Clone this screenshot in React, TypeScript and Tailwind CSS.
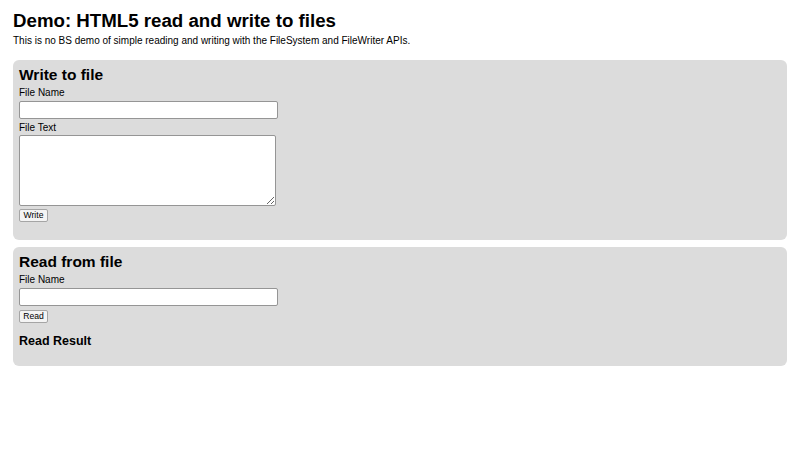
export default function App() {
  return (
    <div className="min-h-[450px] bg-white px-[13px] pt-[10px] text-black" style={{ fontFamily: '"Liberation Sans", Arial, sans-serif' }}>
      <h1 className="text-[18.7px] font-bold leading-[22px]">Demo: HTML5 read and write to files</h1>
      <p className="mt-[3px] text-[10px] leading-[12px]">
        This is no BS demo of simple reading and writing with the FileSystem and FileWriter APIs.
      </p>

      <section className="mt-[13px] rounded-[6px] bg-[#dcdcdc] px-[6px] pb-[18px] pt-[6px]">
        <h2 className="text-[15.5px] font-bold leading-[18px]">Write to file</h2>
        <label className="mt-[3px] block text-[10px] leading-[12px]">File Name</label>
        <input type="text" className="mt-[2px] block h-[18px] w-[259px] rounded-[2px] border border-[#959595] bg-white" />
        <label className="mt-[3px] block text-[10px] leading-[12px]">File Text</label>
        <textarea className="mt-[1px] block h-[71px] w-[257px] rounded-[2px] border border-[#959595] bg-white" />
        <button className="mt-[3px] block h-[13px] w-[29px] rounded-[2px] border border-[#a5a5a5] bg-[#f4f4f4] text-[8.6px] leading-[11px]">
          Write
        </button>
      </section>

      <section className="mt-[7px] rounded-[6px] bg-[#dcdcdc] px-[6px] pb-[17px] pt-[6px]">
        <h2 className="text-[15.5px] font-bold leading-[18px]">Read from file</h2>
        <label className="mt-[3px] block text-[10px] leading-[12px]">File Name</label>
        <input type="text" className="mt-[2px] block h-[18px] w-[259px] rounded-[2px] border border-[#959595] bg-white" />
        <button className="mt-[4px] block h-[13px] w-[29px] rounded-[2px] border border-[#a5a5a5] bg-[#f4f4f4] text-[8.6px] leading-[11px]">
          Read
        </button>
        <h3 className="mt-[11px] text-[12.5px] font-bold leading-[15px]">Read Result</h3>
      </section>
    </div>
  )
}
